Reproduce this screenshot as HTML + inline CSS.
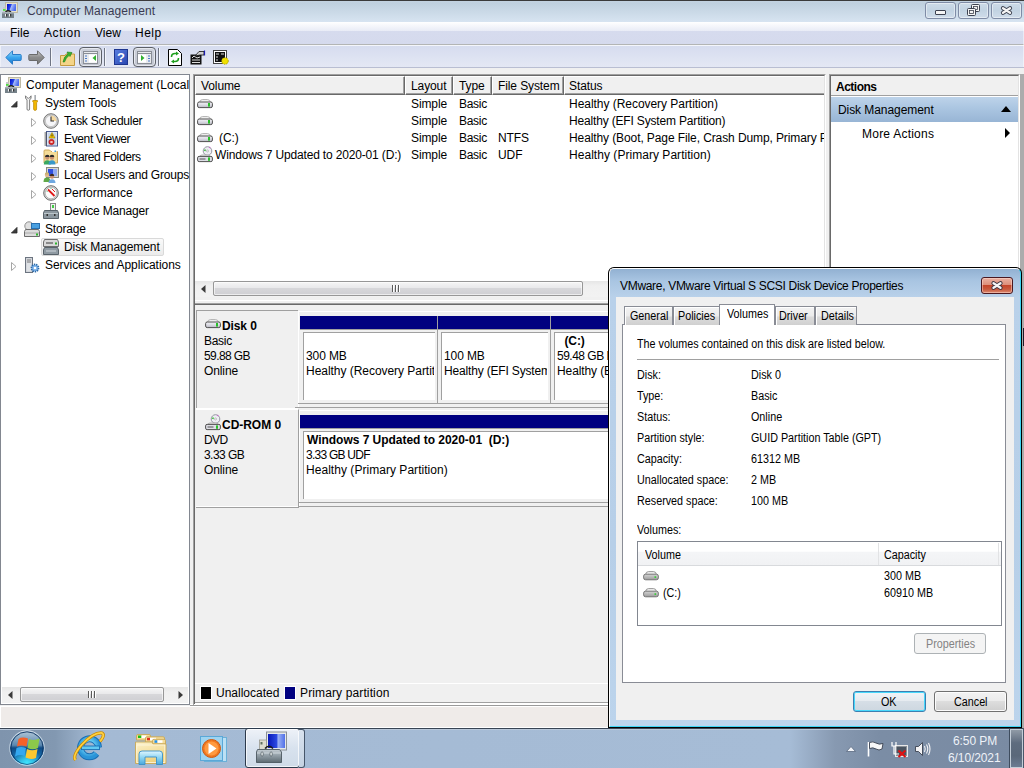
<!DOCTYPE html>
<html><head><meta charset="utf-8">
<style>
*{box-sizing:border-box;}
html,body{margin:0;padding:0;}
body{width:1024px;height:768px;position:relative;overflow:hidden;background:#f0f0f0;font-family:"Liberation Sans",sans-serif;font-size:12px;color:#000;}
.a{position:absolute;}
.t{position:absolute;white-space:nowrap;line-height:15px;height:15px;}
.b{font-weight:bold;}
.dt{position:absolute;white-space:nowrap;line-height:15px;height:15px;font-size:12px;transform:scaleX(0.897);transform-origin:0 0;}
svg{position:absolute;overflow:visible;}
</style></head><body>
<div class="a" style="left:0px;top:0px;width:1024px;height:1px;background:#3a3a3a"></div><div class="a" style="left:0px;top:1px;width:1024px;height:21px;background:linear-gradient(#c3d3e1,#bfd0de 10%,#d7e4f1)"></div><div class="a" style="left:0px;top:22px;width:1024px;height:22px;background:linear-gradient(#ffffff,#e9ecf6 40%,#d6dbee 42%,#d5daed)"></div><div class="a" style="left:0px;top:44px;width:1024px;height:1px;background:#b3b5b5"></div><div class="a" style="left:0px;top:45px;width:1024px;height:1px;background:#f4f6fb"></div><div class="a" style="left:0px;top:46px;width:1024px;height:21px;background:linear-gradient(#d6dcef,#e4e8f4)"></div><div class="a" style="left:0px;top:67px;width:1024px;height:1px;background:#b9bed2"></div><div class="a" style="left:0px;top:46px;width:1px;height:21px;background:#eef0f8"></div><div class="a" style="left:0px;top:74px;width:190px;height:631px;border:1px solid #828790;background:#fff"></div><div class="a" style="left:193px;top:74px;width:633px;height:227px;background:#fff;border-top:1px solid #a0a0a0;border-left:1px solid #a0a0a0;border-right:1px solid #fff;border-bottom:1px solid #fff"></div><div class="a" style="left:194px;top:75px;width:631px;height:225px;border-top:1px solid #696969;border-left:1px solid #696969;border-right:1px solid #e3e3e3;border-bottom:1px solid #e3e3e3"></div><div class="a" style="left:193px;top:303px;width:633px;height:401px;background:#f0f0f0;border-top:1px solid #a0a0a0;border-left:1px solid #a0a0a0;border-right:1px solid #fff;border-bottom:1px solid #fff"></div><div class="a" style="left:194px;top:304px;width:631px;height:399px;border-top:1px solid #696969;border-left:1px solid #696969;border-right:1px solid #e3e3e3;border-bottom:1px solid #e3e3e3"></div><div class="a" style="left:829px;top:74px;width:191px;height:631px;background:#fff;border-top:1px solid #a0a0a0;border-left:1px solid #a0a0a0;border-right:1px solid #fff;border-bottom:1px solid #fff"></div><div class="a" style="left:830px;top:75px;width:189px;height:629px;border-top:1px solid #696969;border-left:1px solid #696969;border-right:1px solid #e3e3e3;border-bottom:1px solid #e3e3e3"></div><div class="a" style="left:1020px;top:74px;width:4px;height:654px;background:#acacac"></div><div class="a" style="left:1023px;top:23px;width:1px;height:44px;background:rgba(255,255,255,.45)"></div><div class="a" style="left:1023px;top:328px;width:1px;height:18px;background:#1a1a2a"></div><div class="a" style="left:190px;top:704px;width:831px;height:1px;background:#fff"></div><div class="a" style="left:190px;top:705px;width:831px;height:1px;background:#9a9a9a"></div><div class="a" style="left:0px;top:706px;width:1021px;height:1px;background:#fff"></div><div class="a" style="left:0px;top:707px;width:1021px;height:21px;background:#efebe9;border-left:1px solid #fff;border-bottom:1px solid #fff"></div><div class="a" style="left:0px;top:728px;width:1024px;height:40px;background:linear-gradient(90deg,#7f94ad 0,#8298b1 55px,#a4bad4 95px,#a6bcd6 790px,#8799b1 835px,#7b8da5 880px,#7a8ba3 1024px)"></div><div class="a" style="left:0px;top:728px;width:1024px;height:1px;background:#384454"></div><div class="a" style="left:0px;top:729px;width:1024px;height:1px;background:#b9c8da"></div><svg style="left:2px;top:2px" width="16" height="16" viewBox="0 0 16 16"><defs><linearGradient id="scr" x1="0" y1="0" x2="1" y2="0.3"><stop offset="0" stop-color="#0008c8"/><stop offset=".45" stop-color="#2848e8"/><stop offset=".55" stop-color="#a8bcf8"/><stop offset="1" stop-color="#4c6cf0"/></linearGradient></defs><rect x="3.5" y="0.5" width="12" height="10" fill="#e6e2cc" stroke="#bdb9a4"/><rect x="5" y="2" width="9" height="7" fill="url(#scr)"/><rect x="1" y="5" width="2.5" height="5" fill="#c8c8cc"/><rect x="1" y="7" width="2.5" height="1.8" fill="#50e040"/><path d="M3.5 10 Q6 7.5 9 10" stroke="#222" stroke-width="1.3" fill="none"/><rect x="0" y="10" width="12" height="6" fill="#76828a"/><rect x="0" y="10" width="12" height="1.5" fill="#a8b2b8"/><rect x="3" y="12" width="1.2" height="2.5" fill="#f0f0f0"/><rect x="4.2" y="12" width="1" height="2.5" fill="#222"/><rect x="7" y="12" width="1.2" height="2.5" fill="#f0f0f0"/><rect x="8.2" y="12" width="1" height="2.5" fill="#222"/></svg><div class="t" style="left:27px;top:4px;letter-spacing:0.11px;color:#3b3b52">Computer Management</div><div class="a" style="left:925px;top:2px;width:31px;height:17px;border:1px solid #7f8ca6;border-radius:3px;background:linear-gradient(#cddbe8,#c2d3e2 50%,#cfdcea);box-shadow:inset 0 0 0 1px rgba(255,255,255,.45)"></div><div class="a" style="left:958px;top:2px;width:31px;height:17px;border:1px solid #7f8ca6;border-radius:3px;background:linear-gradient(#cddbe8,#c2d3e2 50%,#cfdcea);box-shadow:inset 0 0 0 1px rgba(255,255,255,.45)"></div><div class="a" style="left:991px;top:2px;width:31px;height:17px;border:1px solid #7f8ca6;border-radius:3px;background:linear-gradient(#cddbe8,#c2d3e2 50%,#cfdcea);box-shadow:inset 0 0 0 1px rgba(255,255,255,.45)"></div><div class="a" style="left:935px;top:10px;width:11px;height:5px;background:#f4f4f4;border:1px solid #3d4250;border-radius:1px"></div><svg style="left:966px;top:4px" width="15" height="13" viewBox="0 0 15 13"><rect x="5.5" y="0.5" width="8" height="7" rx="1" fill="#f4f4f4" stroke="#3d4250"/><rect x="7.5" y="2.5" width="4" height="3" fill="none" stroke="#3d4250" stroke-width="0.8"/><rect x="1.5" y="4.5" width="8" height="7" rx="1" fill="#f4f4f4" stroke="#3d4250"/><rect x="3.5" y="6.5" width="4" height="3" fill="none" stroke="#3d4250" stroke-width="0.8"/></svg><svg style="left:1000px;top:5px" width="13" height="11" viewBox="0 0 13 11"><path d="M3 3.2 L10 7.8 M10 3.2 L3 7.8" stroke="#3d4250" stroke-width="4.2" stroke-linecap="round"/><path d="M3 3.2 L10 7.8 M10 3.2 L3 7.8" stroke="#f4f4f4" stroke-width="2.3" stroke-linecap="round"/></svg><div class="t" style="left:10px;top:26px;letter-spacing:0px;">File</div><div class="t" style="left:44px;top:26px;letter-spacing:0.6px;">Action</div><div class="t" style="left:95px;top:26px;letter-spacing:0px;">View</div><div class="t" style="left:135px;top:26px;letter-spacing:0.5px;">Help</div><div class="a" style="left:0;top:0;width:189px;height:705px;overflow:hidden"><svg style="left:5px;top:77px" width="16" height="16" viewBox="0 0 16 16"><defs><linearGradient id="scr" x1="0" y1="0" x2="1" y2="0.3"><stop offset="0" stop-color="#0008c8"/><stop offset=".45" stop-color="#2848e8"/><stop offset=".55" stop-color="#a8bcf8"/><stop offset="1" stop-color="#4c6cf0"/></linearGradient></defs><rect x="3.5" y="0.5" width="12" height="10" fill="#e6e2cc" stroke="#bdb9a4"/><rect x="5" y="2" width="9" height="7" fill="url(#scr)"/><rect x="1" y="5" width="2.5" height="5" fill="#c8c8cc"/><rect x="1" y="7" width="2.5" height="1.8" fill="#50e040"/><path d="M3.5 10 Q6 7.5 9 10" stroke="#222" stroke-width="1.3" fill="none"/><rect x="0" y="10" width="12" height="6" fill="#76828a"/><rect x="0" y="10" width="12" height="1.5" fill="#a8b2b8"/><rect x="3" y="12" width="1.2" height="2.5" fill="#f0f0f0"/><rect x="4.2" y="12" width="1" height="2.5" fill="#222"/><rect x="7" y="12" width="1.2" height="2.5" fill="#f0f0f0"/><rect x="8.2" y="12" width="1" height="2.5" fill="#222"/></svg><div class="t" style="left:26px;top:78px;letter-spacing:0.04px;">Computer Management (Local)</div><svg style="left:24px;top:95px" width="16" height="16" viewBox="0 0 16 16"><defs><linearGradient id="wr" x1="0" y1="0" x2="1" y2="0"><stop offset="0" stop-color="#c8c8c8"/><stop offset=".5" stop-color="#fafafa"/><stop offset="1" stop-color="#b0b0b0"/></linearGradient></defs><path d="M1.5 0.8 Q0.8 3.5 3 5 L3 14 Q3 15.3 4.3 15.3 Q5.6 15.3 5.6 14 L5.6 5 Q7.8 3.5 7.1 0.8 L5.6 2.5 L4.3 3.4 L3 2.5 Z" fill="url(#wr)" stroke="#6a6a6a" stroke-width="0.8" stroke-linejoin="round"/><rect x="10.6" y="0" width="1" height="6" fill="#707880"/><path d="M8.8 5.5 L13.4 5.5 L13.4 7 L12.6 7.6 L12.6 14 Q12.6 15.4 11.1 15.4 Q9.6 15.4 9.6 14 L9.6 7.6 L8.8 7 Z" fill="#f2b800" stroke="#b88400" stroke-width="0.7"/></svg><div class="t" style="left:45px;top:96px;letter-spacing:0px;">System Tools</div><svg style="left:11px;top:101px" width="7" height="7" viewBox="0 0 7 7"><path d="M6 0.4 L6 6 L0.4 6 Z" fill="#3c3c3c" stroke="#262626" stroke-width="0.8"/></svg><svg style="left:43px;top:113px" width="16" height="16" viewBox="0 0 16 16"><circle cx="8" cy="8" r="7.3" fill="#d0d0d0" stroke="#767676"/><circle cx="8" cy="8" r="5.6" fill="#f6f6f8" stroke="#b0b0b0" stroke-width="0.6"/><path d="M8 8 L8 2.5 A5.5 5.5 0 0 1 13.5 8 Z" fill="#f4d8a0"/><path d="M8 3.5 L8 8 L11 8" stroke="#333" stroke-width="1.1" fill="none"/></svg><div class="t" style="left:64px;top:114px;letter-spacing:-0.27px;">Task Scheduler</div><svg style="left:31px;top:118px" width="6" height="9" viewBox="0 0 6 9"><path d="M0.5 0.5 L5 4.5 L0.5 8.5 Z" fill="#fff" stroke="#a6a6a6"/></svg><svg style="left:43px;top:131px" width="16" height="16" viewBox="0 0 16 16"><rect x="3.5" y="0.5" width="11" height="14.5" fill="#dce6f4" stroke="#4a5c94"/><path d="M5 3 L13 3 M5 5 L13 5 M5 7 L13 7 M5 9 L13 9 M5 11 L13 11 M5 13 L13 13" stroke="#a8b8d8" stroke-width="0.7"/><path d="M1.5 2 L4 2 M1.5 4 L4 4 M1.5 6 L4 6 M1.5 8 L4 8 M1.5 10 L4 10 M1.5 12 L4 12 M1.5 14 L4 14" stroke="#505050" stroke-width="1"/><path d="M9 1.5 L12 7 L6 7 Z" fill="#f4c800" stroke="#9a7a00" stroke-width="0.6"/><path d="M9 3.5 L9 5.5" stroke="#222" stroke-width="0.9"/><circle cx="8.5" cy="11" r="2.7" fill="#d82828" stroke="#a01010" stroke-width="0.5"/><path d="M7.5 10 L9.5 12 M9.5 10 L7.5 12" stroke="#fff" stroke-width="0.9"/></svg><div class="t" style="left:64px;top:132px;letter-spacing:-0.36px;">Event Viewer</div><svg style="left:31px;top:136px" width="6" height="9" viewBox="0 0 6 9"><path d="M0.5 0.5 L5 4.5 L0.5 8.5 Z" fill="#fff" stroke="#a6a6a6"/></svg><svg style="left:43px;top:149px" width="16" height="16" viewBox="0 0 16 16"><path d="M1 3.5 L1 14 L14.5 14 L14.5 2.5 L8 2.5 L6.5 1 L2 1 Q1 1 1 2 Z" fill="#f4dc98" stroke="#c8a050" stroke-width="0.9"/><rect x="9" y="1.5" width="4.5" height="1.5" fill="#fff"/><rect x="11.5" y="1.5" width="1.5" height="1.5" fill="#3a9ae0"/><circle cx="4.3" cy="8.6" r="2.2" fill="#c89070"/><path d="M2 8 Q2 5.8 4.3 5.8 Q6.6 5.8 6.6 8 Z" fill="#2a2a2a"/><path d="M0.8 15.5 Q0.8 11.2 4.3 11.2 Q7.8 11.2 7.8 15.5 Z" fill="#3aa860"/><circle cx="9" cy="8.6" r="2.2" fill="#c89070"/><path d="M6.7 8 Q6.7 5.8 9 5.8 Q11.3 5.8 11.3 8 Z" fill="#2a2a2a"/><path d="M5.5 15.5 Q5.5 11.2 9 11.2 Q12.5 11.2 12.5 15.5 Z" fill="#3a98c8"/></svg><div class="t" style="left:64px;top:150px;letter-spacing:-0.38px;">Shared Folders</div><svg style="left:31px;top:154px" width="6" height="9" viewBox="0 0 6 9"><path d="M0.5 0.5 L5 4.5 L0.5 8.5 Z" fill="#fff" stroke="#a6a6a6"/></svg><svg style="left:43px;top:167px" width="16" height="16" viewBox="0 0 16 16"><rect x="3.5" y="0.5" width="12" height="10" fill="#d8d8d0" stroke="#8a8a80"/><rect x="5" y="2" width="9" height="7" fill="#3050e0"/><rect x="10" y="2" width="4" height="7" fill="#90a8f0"/><circle cx="4" cy="8" r="2.2" fill="#e0b890"/><path d="M1.8 7.5 Q1.8 5.3 4 5.3 Q6.2 5.3 6.2 7.5 Z" fill="#c8b070"/><path d="M0.5 15 Q0.5 10.6 4 10.6 Q7.5 10.6 7.5 15 Z" fill="#60a848"/><circle cx="9" cy="9.5" r="2.2" fill="#c89070"/><path d="M6.8 9 Q6.8 6.8 9 6.8 Q11.2 6.8 11.2 9 Z" fill="#3a2a20"/><path d="M5.5 16 Q5.5 12.2 9 12.2 Q12.5 12.2 12.5 16 Z" fill="#70a8e0"/></svg><div class="t" style="left:64px;top:168px;letter-spacing:-0.2px;">Local Users and Groups</div><svg style="left:31px;top:172px" width="6" height="9" viewBox="0 0 6 9"><path d="M0.5 0.5 L5 4.5 L0.5 8.5 Z" fill="#fff" stroke="#a6a6a6"/></svg><svg style="left:43px;top:185px" width="16" height="16" viewBox="0 0 16 16"><circle cx="8" cy="8" r="7.3" fill="#d8d8d8" stroke="#6e6e6e"/><circle cx="8" cy="8" r="5.8" fill="#fbfbfb" stroke="#9a9a9a" stroke-width="0.6"/><path d="M3.5 6 L4.5 6.5 M5 3.8 L5.8 4.6 M8 2.8 L8 3.8" stroke="#3a9a5a" stroke-width="0.9"/><path d="M5 4.5 L11.5 11" stroke="#e01818" stroke-width="1.8"/><path d="M9 4 L12 7" stroke="#e01818" stroke-width="1"/></svg><div class="t" style="left:64px;top:186px;letter-spacing:0px;">Performance</div><svg style="left:31px;top:190px" width="6" height="9" viewBox="0 0 6 9"><path d="M0.5 0.5 L5 4.5 L0.5 8.5 Z" fill="#fff" stroke="#a6a6a6"/></svg><svg style="left:43px;top:203px" width="16" height="16" viewBox="0 0 16 16"><rect x="7.5" y="0.5" width="5" height="8" fill="#f0f0f0" stroke="#888"/><rect x="9" y="2" width="2" height="3" fill="#4c4"/><path d="M1.5 7.5 L14.5 7.5 L15.5 10 L15.5 15.5 L0.5 15.5 L0.5 10 Z" fill="#8c979f" stroke="#59636b"/><path d="M1 10.5 L15 10.5" stroke="#c8d0d6" stroke-width="0.8"/><rect x="3.5" y="11" width="1.5" height="2" fill="#333"/><rect x="11" y="11" width="1.5" height="2" fill="#333"/></svg><div class="t" style="left:64px;top:204px;letter-spacing:-0.19px;">Device Manager</div><svg style="left:24px;top:221px" width="16" height="16" viewBox="0 0 16 16"><circle cx="5" cy="5" r="4.2" fill="#e0e0e0" stroke="#909090"/><rect x="7.5" y="2.5" width="8" height="5" fill="#4aa0e0" stroke="#2a70b0"/><path d="M1.5 8.5 L14.5 8.5 L15.5 10.5 L15.5 15.5 L0.5 15.5 L0.5 10.5 Z" fill="#dcdcdc" stroke="#6d6d6d"/><path d="M1 12 L15 12" stroke="#a0a0a0" stroke-width="0.8"/><rect x="12" y="12.5" width="2" height="2" fill="#2bb52b"/></svg><div class="t" style="left:45px;top:222px;letter-spacing:-0.17px;">Storage</div><svg style="left:11px;top:227px" width="7" height="7" viewBox="0 0 7 7"><path d="M6 0.4 L6 6 L0.4 6 Z" fill="#3c3c3c" stroke="#262626" stroke-width="0.8"/></svg><div class="a" style="left:41px;top:238px;width:123px;height:18px;border:1px solid #d9d9d9;border-radius:2px;background:linear-gradient(#fafafa,#ebebeb)"></div><svg style="left:43px;top:239px" width="16" height="16" viewBox="0 0 16 16"><path d="M1.5 0.5 L14.5 0.5 L15.5 3 L15.5 7.5 L0.5 7.5 L0.5 3 Z" fill="#d8d8d8" stroke="#6d6d6d"/><path d="M3 4 L10 4" stroke="#555" stroke-width="1.2"/><rect x="12" y="3.5" width="2" height="2" fill="#2bb52b"/><path d="M1.5 8.5 L14.5 8.5 L15.5 11 L15.5 15.5 L0.5 15.5 L0.5 11 Z" fill="#8f9aa2" stroke="#59636b"/><path d="M3 12 L13 12" stroke="#d0d6dc" stroke-width="1"/></svg><div class="t" style="left:64px;top:240px;letter-spacing:-0.07px;">Disk Management</div><svg style="left:24px;top:257px" width="16" height="16" viewBox="0 0 16 16"><rect x="1.5" y="0.5" width="7" height="15" fill="#c8ccd2" stroke="#6c7480"/><rect x="2.5" y="1.5" width="5" height="13" fill="#dfe2e6"/><path d="M3 3 L7 3 M3 5 L7 5" stroke="#555" stroke-width="0.8"/><circle cx="11" cy="11" r="3.6" fill="#7ab0e8" stroke="#2d6aa8" stroke-dasharray="1.3 0.9" stroke-width="1.6"/><circle cx="11" cy="11" r="1.3" fill="#fff"/></svg><div class="t" style="left:45px;top:258px;letter-spacing:-0.04px;">Services and Applications</div><svg style="left:11px;top:262px" width="6" height="9" viewBox="0 0 6 9"><path d="M0.5 0.5 L5 4.5 L0.5 8.5 Z" fill="#fff" stroke="#a6a6a6"/></svg></div><div class="a" style="left:2px;top:687px;width:186px;height:16px;background:linear-gradient(#e6e6e6,#f0f0f0 30%,#f2f2f2)"></div><svg style="left:8px;top:691px" width="5" height="8" viewBox="0 0 5 8"><path d="M4.5 0 L0 4 L4.5 8 Z" fill="#3a3a3a"/></svg><svg style="left:178px;top:691px" width="5" height="8" viewBox="0 0 5 8"><path d="M0.5 0 L5 4 L0.5 8 Z" fill="#3a3a3a"/></svg><div class="a" style="left:20px;top:687px;width:144px;height:15px;border:1px solid #979797;border-radius:2px;background:linear-gradient(#f6f6f6,#e9e9eb 45%,#d7d7da 50%,#cfcfd3);box-shadow:inset 0 0 0 1px rgba(255,255,255,.6)"></div><div class="a" style="left:88px;top:691px;width:2px;height:7px;background:#5a5a5a;border-right:1px solid #fff"></div><div class="a" style="left:91px;top:691px;width:2px;height:7px;background:#5a5a5a;border-right:1px solid #fff"></div><div class="a" style="left:94px;top:691px;width:2px;height:7px;background:#5a5a5a;border-right:1px solid #fff"></div><div class="a" style="left:195px;top:76px;width:629px;height:223px;overflow:hidden"><div class="a" style="left:0px;top:0px;width:210px;height:19px;background:#f0f0f0;border-top:1px solid #fff;border-left:1px solid #fff;border-right:1px solid #696969;border-bottom:1px solid #696969"></div><div class="a" style="left:1px;top:17px;width:208px;height:1px;background:#a0a0a0"></div><div class="a" style="left:208px;top:1px;width:1px;height:17px;background:#a0a0a0"></div><div class="t" style="left:6px;top:3px;letter-spacing:-0.1px;">Volume</div><div class="a" style="left:210px;top:0px;width:48px;height:19px;background:#f0f0f0;border-top:1px solid #fff;border-left:1px solid #fff;border-right:1px solid #696969;border-bottom:1px solid #696969"></div><div class="a" style="left:211px;top:17px;width:46px;height:1px;background:#a0a0a0"></div><div class="a" style="left:256px;top:1px;width:1px;height:17px;background:#a0a0a0"></div><div class="t" style="left:216px;top:3px;letter-spacing:-0.1px;">Layout</div><div class="a" style="left:258px;top:0px;width:39px;height:19px;background:#f0f0f0;border-top:1px solid #fff;border-left:1px solid #fff;border-right:1px solid #696969;border-bottom:1px solid #696969"></div><div class="a" style="left:259px;top:17px;width:37px;height:1px;background:#a0a0a0"></div><div class="a" style="left:295px;top:1px;width:1px;height:17px;background:#a0a0a0"></div><div class="t" style="left:264px;top:3px;letter-spacing:-0.1px;">Type</div><div class="a" style="left:297px;top:0px;width:72px;height:19px;background:#f0f0f0;border-top:1px solid #fff;border-left:1px solid #fff;border-right:1px solid #696969;border-bottom:1px solid #696969"></div><div class="a" style="left:298px;top:17px;width:70px;height:1px;background:#a0a0a0"></div><div class="a" style="left:367px;top:1px;width:1px;height:17px;background:#a0a0a0"></div><div class="t" style="left:303px;top:3px;letter-spacing:-0.1px;">File System</div><div class="a" style="left:369px;top:0px;width:337px;height:19px;background:#f0f0f0;border-top:1px solid #fff;border-left:1px solid #fff;border-right:1px solid #696969;border-bottom:1px solid #696969"></div><div class="a" style="left:370px;top:17px;width:335px;height:1px;background:#a0a0a0"></div><div class="a" style="left:704px;top:1px;width:1px;height:17px;background:#a0a0a0"></div><div class="t" style="left:374px;top:3px;letter-spacing:-0.1px;">Status</div><svg style="left:2px;top:23px" width="16" height="10" viewBox="0 0 16 10"><defs><linearGradient id="dg" x1="0" y1="0" x2="0" y2="1"><stop offset="0" stop-color="#f2f2f6"/><stop offset=".5" stop-color="#dcdce4"/><stop offset="1" stop-color="#b8b8c2"/></linearGradient></defs><path d="M2.5 3.2 Q3 0.6 5.5 0.6 L10.5 0.6 Q13 0.6 13.5 3.2" fill="#f4f4f4" stroke="#a8a8a8" stroke-width="0.9"/><rect x="0.6" y="3" width="14.8" height="5.6" rx="1.6" fill="url(#dg)" stroke="#505050" stroke-width="1"/><rect x="11" y="4" width="2" height="3.6" fill="#28c028"/></svg><div class="t" style="left:216px;top:21px;letter-spacing:-0.1px;">Simple</div><div class="t" style="left:264px;top:21px;letter-spacing:-0.3px;">Basic</div><div class="t" style="left:374px;top:21px;width:255px;overflow:hidden;letter-spacing:-0.04px">Healthy (Recovery Partition)</div><svg style="left:2px;top:40px" width="16" height="10" viewBox="0 0 16 10"><defs><linearGradient id="dg" x1="0" y1="0" x2="0" y2="1"><stop offset="0" stop-color="#f2f2f6"/><stop offset=".5" stop-color="#dcdce4"/><stop offset="1" stop-color="#b8b8c2"/></linearGradient></defs><path d="M2.5 3.2 Q3 0.6 5.5 0.6 L10.5 0.6 Q13 0.6 13.5 3.2" fill="#f4f4f4" stroke="#a8a8a8" stroke-width="0.9"/><rect x="0.6" y="3" width="14.8" height="5.6" rx="1.6" fill="url(#dg)" stroke="#505050" stroke-width="1"/><rect x="11" y="4" width="2" height="3.6" fill="#28c028"/></svg><div class="t" style="left:216px;top:38px;letter-spacing:-0.1px;">Simple</div><div class="t" style="left:264px;top:38px;letter-spacing:-0.3px;">Basic</div><div class="t" style="left:374px;top:38px;width:255px;overflow:hidden;letter-spacing:-0.17px">Healthy (EFI System Partition)</div><svg style="left:2px;top:57px" width="16" height="10" viewBox="0 0 16 10"><defs><linearGradient id="dg" x1="0" y1="0" x2="0" y2="1"><stop offset="0" stop-color="#f2f2f6"/><stop offset=".5" stop-color="#dcdce4"/><stop offset="1" stop-color="#b8b8c2"/></linearGradient></defs><path d="M2.5 3.2 Q3 0.6 5.5 0.6 L10.5 0.6 Q13 0.6 13.5 3.2" fill="#f4f4f4" stroke="#a8a8a8" stroke-width="0.9"/><rect x="0.6" y="3" width="14.8" height="5.6" rx="1.6" fill="url(#dg)" stroke="#505050" stroke-width="1"/><rect x="11" y="4" width="2" height="3.6" fill="#28c028"/></svg><div class="t" style="left:24px;top:55px;letter-spacing:-0.1px;">(C:)</div><div class="t" style="left:216px;top:55px;letter-spacing:-0.1px;">Simple</div><div class="t" style="left:264px;top:55px;letter-spacing:-0.3px;">Basic</div><div class="t" style="left:303px;top:55px;letter-spacing:-0.1px;">NTFS</div><div class="t" style="left:374px;top:55px;width:255px;overflow:hidden;letter-spacing:-0.1px">Healthy (Boot, Page File, Crash Dump, Primary Partition)</div><svg style="left:2px;top:70px" width="16" height="16" viewBox="0 0 16 16"><circle cx="10.5" cy="5" r="4.3" fill="#eeeef4" stroke="#8c8c98" stroke-width="0.9"/><circle cx="10.5" cy="5" r="1" fill="#fff" stroke="#999" stroke-width="0.6"/><path d="M7.2 4 L8.8 4.6" stroke="#40c040" stroke-width="1.6"/><path d="M12.5 1.2 L13.2 1.8" stroke="#d040d0" stroke-width="1.2"/><path d="M2.5 11 Q3 9 5 9 L11 9 Q13 9 13.5 11" fill="#f0f0f0" stroke="#a8a8a8" stroke-width="0.9"/><rect x="0.6" y="10.4" width="14.8" height="5.2" rx="1.5" fill="#dedee6" stroke="#505050" stroke-width="1"/><path d="M2.5 13 L8.5 13" stroke="#555" stroke-width="1"/><rect x="11" y="11.4" width="2" height="3.4" fill="#28c028"/></svg><div class="t" style="left:20px;top:72px;letter-spacing:-0.16px;">Windows 7 Updated to 2020-01 (D:)</div><div class="t" style="left:216px;top:72px;letter-spacing:-0.1px;">Simple</div><div class="t" style="left:264px;top:72px;letter-spacing:-0.3px;">Basic</div><div class="t" style="left:303px;top:72px;letter-spacing:-0.1px;">UDF</div><div class="t" style="left:374px;top:72px;width:255px;overflow:hidden;letter-spacing:0.04px">Healthy (Primary Partition)</div></div><div class="a" style="left:195px;top:281px;width:629px;height:16px;background:linear-gradient(#e6e6e6,#f0f0f0 30%,#f2f2f2)"></div><svg style="left:201px;top:285px" width="5" height="8" viewBox="0 0 5 8"><path d="M4.5 0 L0 4 L4.5 8 Z" fill="#3a3a3a"/></svg><svg style="left:814px;top:285px" width="5" height="8" viewBox="0 0 5 8"><path d="M0.5 0 L5 4 L0.5 8 Z" fill="#3a3a3a"/></svg><div class="a" style="left:213px;top:281px;width:370px;height:15px;border:1px solid #979797;border-radius:2px;background:linear-gradient(#f6f6f6,#e9e9eb 45%,#d7d7da 50%,#cfcfd3);box-shadow:inset 0 0 0 1px rgba(255,255,255,.6)"></div><div class="a" style="left:392px;top:285px;width:2px;height:7px;background:#5a5a5a;border-right:1px solid #fff"></div><div class="a" style="left:395px;top:285px;width:2px;height:7px;background:#5a5a5a;border-right:1px solid #fff"></div><div class="a" style="left:398px;top:285px;width:2px;height:7px;background:#5a5a5a;border-right:1px solid #fff"></div><div class="a" style="left:195px;top:297px;width:629px;height:3px;background:#f0f0f0"></div><div class="a" style="left:195px;top:305px;width:629px;height:398px;background:#f0f0f0"></div><div class="a" style="left:196px;top:310px;width:102px;height:98px;background:#f0f0f0;border-top:1px solid #a0a0a0;border-left:1px solid #a0a0a0"></div><div class="a" style="left:196px;top:408px;width:102px;height:1px;background:#fff"></div><svg style="left:205px;top:319px" width="16" height="10" viewBox="0 0 16 10"><defs><linearGradient id="dg" x1="0" y1="0" x2="0" y2="1"><stop offset="0" stop-color="#f2f2f6"/><stop offset=".5" stop-color="#dcdce4"/><stop offset="1" stop-color="#b8b8c2"/></linearGradient></defs><path d="M2.5 3.2 Q3 0.6 5.5 0.6 L10.5 0.6 Q13 0.6 13.5 3.2" fill="#f4f4f4" stroke="#a8a8a8" stroke-width="0.9"/><rect x="0.6" y="3" width="14.8" height="5.6" rx="1.6" fill="url(#dg)" stroke="#505050" stroke-width="1"/><rect x="11" y="4" width="2" height="3.6" fill="#28c028"/></svg><div class="t" style="left:222px;top:319px;letter-spacing:-0.1px;font-weight:bold">Disk 0</div><div class="t" style="left:204px;top:334px;letter-spacing:-0.3px;">Basic</div><div class="t" style="left:204px;top:349px;letter-spacing:-0.6px;">59.88 GB</div><div class="t" style="left:204px;top:364px;letter-spacing:-0.1px;">Online</div><div class="a" style="left:196px;top:409px;width:103px;height:99px;background:#f0f0f0;border-top:1px solid #fff;border-bottom:1px solid #a0a0a0;border-right:1px solid #a0a0a0"></div><div class="a" style="left:196px;top:506px;width:102px;height:1px;background:#fff"></div><svg style="left:205px;top:414px" width="16" height="16" viewBox="0 0 16 16"><circle cx="10.5" cy="5" r="4.3" fill="#eeeef4" stroke="#8c8c98" stroke-width="0.9"/><circle cx="10.5" cy="5" r="1" fill="#fff" stroke="#999" stroke-width="0.6"/><path d="M7.2 4 L8.8 4.6" stroke="#40c040" stroke-width="1.6"/><path d="M12.5 1.2 L13.2 1.8" stroke="#d040d0" stroke-width="1.2"/><path d="M2.5 11 Q3 9 5 9 L11 9 Q13 9 13.5 11" fill="#f0f0f0" stroke="#a8a8a8" stroke-width="0.9"/><rect x="0.6" y="10.4" width="14.8" height="5.2" rx="1.5" fill="#dedee6" stroke="#505050" stroke-width="1"/><path d="M2.5 13 L8.5 13" stroke="#555" stroke-width="1"/><rect x="11" y="11.4" width="2" height="3.4" fill="#28c028"/></svg><div class="t" style="left:222px;top:418px;letter-spacing:-0.04px;font-weight:bold">CD-ROM 0</div><div class="t" style="left:204px;top:433px;letter-spacing:-0.6px;">DVD</div><div class="t" style="left:204px;top:448px;letter-spacing:-0.55px;">3.33 GB</div><div class="t" style="left:204px;top:463px;letter-spacing:-0.1px;">Online</div><div class="a" style="left:298px;top:311px;width:526px;height:96px;background:#f0f0f0;border-top:1px solid #fff;border-left:1px solid #fff"></div><div class="a" style="left:298px;top:403px;width:526px;height:1px;background:#a0a0a0"></div><div class="a" style="left:295px;top:407px;width:529px;height:1px;background:#a0a0a0"></div><div class="a" style="left:300px;top:316px;width:137px;height:13px;background:#000080"></div><div class="a" style="left:300px;top:329px;width:137px;height:1px;background:#a0a0a0"></div><div class="a" style="left:303px;top:332px;width:132px;height:68px;background:#fff;border-top:1px solid #a0a0a0;border-left:1px solid #a0a0a0"></div><div class="a" style="left:304px;top:333px;width:130px;height:66px;overflow:hidden"><div class="t" style="left:2px;top:16px;letter-spacing:-0.1px;">300 MB</div><div class="t" style="left:2px;top:31px;letter-spacing:-0.04px;">Healthy (Recovery Partition)</div></div><div class="a" style="left:438px;top:316px;width:112px;height:13px;background:#000080"></div><div class="a" style="left:438px;top:329px;width:112px;height:1px;background:#a0a0a0"></div><div class="a" style="left:441px;top:332px;width:107px;height:68px;background:#fff;border-top:1px solid #a0a0a0;border-left:1px solid #a0a0a0"></div><div class="a" style="left:442px;top:333px;width:105px;height:66px;overflow:hidden"><div class="t" style="left:2px;top:16px;letter-spacing:-0.1px;">100 MB</div><div class="t" style="left:2px;top:31px;letter-spacing:-0.17px;">Healthy (EFI System Partition)</div></div><div class="a" style="left:437px;top:316px;width:1px;height:87px;background:#a0a0a0"></div><div class="a" style="left:550px;top:316px;width:1px;height:87px;background:#a0a0a0"></div><div class="a" style="left:551px;top:316px;width:273px;height:13px;background:#000080"></div><div class="a" style="left:551px;top:329px;width:273px;height:1px;background:#a0a0a0"></div><div class="a" style="left:554px;top:332px;width:268px;height:68px;background:#fff;border-top:1px solid #a0a0a0;border-left:1px solid #a0a0a0"></div><div class="a" style="left:555px;top:333px;width:266px;height:66px;overflow:hidden"><div class="t" style="left:3px;top:1px;letter-spacing:-0.1px;font-weight:bold">&nbsp;&nbsp;(C:)</div><div class="t" style="left:2px;top:16px;letter-spacing:-0.5px;">59.48 GB NTFS</div><div class="t" style="left:2px;top:31px;letter-spacing:-0.1px;">Healthy (Boot, Page File, Crash Dump, Primary Partition)</div></div><div class="a" style="left:299px;top:410px;width:525px;height:96px;background:#f0f0f0;border-top:1px solid #fff;border-left:1px solid #fff"></div><div class="a" style="left:299px;top:502px;width:525px;height:1px;background:#a0a0a0"></div><div class="a" style="left:299px;top:506px;width:525px;height:1px;background:#a0a0a0"></div><div class="a" style="left:300px;top:415px;width:524px;height:13px;background:#000080"></div><div class="a" style="left:300px;top:428px;width:524px;height:1px;background:#a0a0a0"></div><div class="a" style="left:303px;top:431px;width:519px;height:68px;background:#fff;border-top:1px solid #a0a0a0;border-left:1px solid #a0a0a0"></div><div class="a" style="left:304px;top:432px;width:517px;height:66px;overflow:hidden"><div class="t" style="left:3px;top:1px;letter-spacing:-0.03px;font-weight:bold">Windows 7 Updated to 2020-01&nbsp; (D:)</div><div class="t" style="left:2px;top:16px;letter-spacing:-0.75px;">3.33 GB UDF</div><div class="t" style="left:2px;top:31px;letter-spacing:0.04px;">Healthy (Primary Partition)</div></div><div class="a" style="left:195px;top:683px;width:629px;height:1px;background:#fff"></div><div class="a" style="left:195px;top:702px;width:629px;height:1px;background:#a0a0a0"></div><div class="a" style="left:200px;top:686px;width:12px;height:14px;background:#000;border:1px solid #fff"></div><div class="t" style="left:216px;top:686px;letter-spacing:0px;">Unallocated</div><div class="a" style="left:284px;top:686px;width:12px;height:14px;background:#000080;border:1px solid #fff"></div><div class="t" style="left:300px;top:686px;letter-spacing:0.125px;">Primary partition</div><div class="a" style="left:193px;top:74px;width:1px;height:631px;background:#a0a0a0"></div><div class="a" style="left:194px;top:75px;width:1px;height:629px;background:#696969"></div><div class="a" style="left:831px;top:76px;width:187px;height:19px;background:#f0f0f0"></div><div class="a" style="left:831px;top:95px;width:187px;height:1px;background:#a0a0a0"></div><div class="a" style="left:831px;top:96px;width:187px;height:1px;background:#fff"></div><div class="t" style="left:836px;top:80px;letter-spacing:-0.5px;font-weight:bold">Actions</div><div class="a" style="left:831px;top:97px;width:187px;height:25px;background:linear-gradient(#bdd3ea,#a9c4e0 50%,#98b5d5)"></div><div class="t" style="left:838px;top:103px;letter-spacing:-0.07px;">Disk Management</div><svg style="left:1001px;top:106px" width="10" height="6" viewBox="0 0 10 6"><path d="M0 6 L5 0 L10 6 Z" fill="#000"/></svg><div class="t" style="left:862px;top:127px;letter-spacing:0.23px;">More Actions</div><svg style="left:1005px;top:128px" width="5" height="10" viewBox="0 0 5 10"><path d="M0 0 L5 5 L0 10 Z" fill="#000"/></svg><svg style="left:5px;top:50px" width="17" height="15" viewBox="0 0 17 15"><defs><linearGradient id="ab" x1="0" y1="0" x2="0" y2="1"><stop offset="0" stop-color="#9fe0fc"/><stop offset=".5" stop-color="#3aa6ee"/><stop offset="1" stop-color="#1a78d0"/></linearGradient></defs><path d="M0.8 7.5 L7.5 0.8 L7.5 4.5 L15.5 4.5 Q16.2 4.5 16.2 5.5 L16.2 9.5 Q16.2 10.5 15.5 10.5 L7.5 10.5 L7.5 14.2 Z" fill="url(#ab)" stroke="#2a7cc8" stroke-width="1" stroke-linejoin="round"/></svg><svg style="left:28px;top:50px" width="17" height="15" viewBox="0 0 17 15"><defs><linearGradient id="af" x1="0" y1="0" x2="0" y2="1"><stop offset="0" stop-color="#c8c8c8"/><stop offset=".5" stop-color="#8c8c8c"/><stop offset="1" stop-color="#777"/></linearGradient></defs><path d="M16.2 7.5 L9.5 0.8 L9.5 4.5 L1.5 4.5 Q0.8 4.5 0.8 5.5 L0.8 9.5 Q0.8 10.5 1.5 10.5 L9.5 10.5 L9.5 14.2 Z" fill="url(#af)" stroke="#6a6a6a" stroke-width="1" stroke-linejoin="round"/></svg><div class="a" style="left:50px;top:48px;width:1px;height:18px;background:#6f7584"></div><div class="a" style="left:51px;top:48px;width:1px;height:18px;background:#f4f6fb"></div><div class="a" style="left:104px;top:48px;width:1px;height:18px;background:#6f7584"></div><div class="a" style="left:105px;top:48px;width:1px;height:18px;background:#f4f6fb"></div><div class="a" style="left:158px;top:48px;width:1px;height:18px;background:#6f7584"></div><div class="a" style="left:159px;top:48px;width:1px;height:18px;background:#f4f6fb"></div><svg style="left:60px;top:50px" width="15" height="16" viewBox="0 0 15 16"><path d="M0.5 5.5 L5 5.5 L6 4 L14.5 4 L14.5 15.5 L0.5 15.5 Z" fill="#f4d488" stroke="#c49a40"/><path d="M3 12 Q4 6 8 4 L7 2 L12 2.5 L10 6.5 L9 5.5 Q6 7.5 4.5 12 Z" fill="#38b030" stroke="#208018" stroke-width="0.6"/></svg><div class="a" style="left:79px;top:47px;width:23px;height:20px;border:1px solid #5c6068;border-radius:4px;background:linear-gradient(#cdd1db,#c0c4cf);box-shadow:inset 0 0 0 1px #e6e8ee"></div><div class="a" style="left:133px;top:47px;width:23px;height:20px;border:1px solid #5c6068;border-radius:4px;background:linear-gradient(#cdd1db,#c0c4cf);box-shadow:inset 0 0 0 1px #e6e8ee"></div><svg style="left:83px;top:51px" width="15" height="13" viewBox="0 0 15 13"><rect x="0.5" y="0.5" width="14" height="12" fill="#e8eaee" stroke="#8a8e96"/><path d="M1 2.5 L14 2.5" stroke="#8a8e96"/><rect x="6" y="3.5" width="8" height="8" fill="#fff"/><path d="M2 5 L4 5 M2 7.5 L4 7.5 M2 10 L4 10" stroke="#4a7ac8" stroke-width="1.2"/><path d="M13 4 L9.5 7 L13 10 Z" fill="#30b030"/></svg><svg style="left:137px;top:51px" width="15" height="13" viewBox="0 0 15 13"><rect x="0.5" y="0.5" width="14" height="12" fill="#e8eaee" stroke="#8a8e96"/><path d="M1 2.5 L14 2.5" stroke="#8a8e96"/><rect x="1" y="3.5" width="8" height="8" fill="#fff"/><path d="M11 5 L13 5 M11 7.5 L13 7.5 M11 10 L13 10" stroke="#4a7ac8" stroke-width="1.2"/><path d="M4 4 L7.5 7 L4 10 Z" fill="#30b030"/></svg><svg style="left:114px;top:49px" width="14" height="16" viewBox="0 0 14 16"><defs><linearGradient id="hg" x1="0" y1="0" x2="1" y2="1"><stop offset="0" stop-color="#5a7ee0"/><stop offset="1" stop-color="#2846b0"/></linearGradient></defs><rect x="0.5" y="0.5" width="13" height="15" fill="url(#hg)" stroke="#1e3690"/><text x="7" y="12.5" font-family="Liberation Sans" font-size="13" font-weight="bold" fill="#fff" text-anchor="middle">?</text></svg><svg style="left:168px;top:49px" width="14" height="17" viewBox="0 0 14 17"><path d="M0.5 0.5 L9.5 0.5 L13.5 4.5 L13.5 16.5 L0.5 16.5 Z" fill="#fff" stroke="#000"/><path d="M3.5 8 Q3.5 4.5 7 4.5 L9 4.5" stroke="#20a020" stroke-width="1.6" fill="none"/><path d="M8 2.5 L11 4.5 L8 6.5 Z" fill="#20a020"/><path d="M10.5 9 Q10.5 12.5 7 12.5 L5 12.5" stroke="#20a020" stroke-width="1.6" fill="none"/><path d="M6 10.5 L3 12.5 L6 14.5 Z" fill="#20a020"/></svg><svg style="left:190px;top:50px" width="16" height="15" viewBox="0 0 16 15"><rect x="0.5" y="4.5" width="11" height="10" fill="#111"/><path d="M2 10 L10 10 M2 12.5 L10 12.5" stroke="#ddd" stroke-width="1"/><path d="M2 8 L4 6 L7 8 L10 7" stroke="#ddd" stroke-width="1" fill="none"/><path d="M5 6 L9 1.5 L14 1.5 L14 5 L10 5 Z" fill="#d0d0d0" stroke="#111" stroke-width="0.8"/><path d="M14.5 0.5 L14.5 5.5" stroke="#1a1ab0" stroke-width="1.2"/></svg><svg style="left:213px;top:50px" width="17" height="16" viewBox="0 0 17 16"><rect x="0.5" y="0.5" width="13" height="13" fill="#fff" stroke="#444"/><rect x="2" y="2" width="10" height="10" fill="#111"/><path d="M3 4 L6 4 M8 4 L11 4 M3 7 L5 7 M3 10 L5 10" stroke="#ddd" stroke-width="1.2"/><circle cx="12" cy="11" r="3.3" fill="#f0e000" stroke="#a09000" stroke-width="0.8" stroke-dasharray="1.4 1"/></svg><svg style="left:9px;top:730px" width="36" height="36" viewBox="0 0 36 36"><defs><linearGradient id="orb" x1="0" y1="0" x2="0" y2="1"><stop offset="0" stop-color="#b4c8d8"/><stop offset=".42" stop-color="#5a88b0"/><stop offset=".5" stop-color="#0e4a84"/><stop offset=".8" stop-color="#1a78b8"/><stop offset="1" stop-color="#30c8f0"/></linearGradient><radialGradient id="orbglow" cx=".5" cy=".95" r=".45"><stop offset="0" stop-color="#40e8ff" stop-opacity=".9"/><stop offset="1" stop-color="#40e8ff" stop-opacity="0"/></radialGradient></defs><circle cx="18" cy="18" r="17.3" fill="url(#orb)" stroke="#d8e4ee" stroke-width="1" stroke-opacity=".8"/><circle cx="18" cy="18" r="16.2" fill="none" stroke="#0c3260" stroke-width="0.9"/><circle cx="18" cy="18" r="16" fill="url(#orbglow)"/><path d="M9.5 9 Q13 6.5 19 8.5 L17.5 16.5 Q12 14.5 8 16.5 Z" fill="#f4622a"/><path d="M20 9 Q25 11 30.5 8.5 L29 18 Q24 20.5 18.5 18 Z" fill="#8cc84a"/><path d="M7.5 18 Q12 16 17 18 L15.5 26 Q11 24 6 26.5 Z" fill="#34a8f0"/><path d="M18 19 Q23 21.5 28.5 19 L27 28 Q22 30 16.5 27.5 Z" fill="#fcc830"/></svg><svg style="left:73px;top:731px" width="32" height="31" viewBox="0 0 32 31"><defs><radialGradient id="ie" cx=".45" cy=".4" r=".6"><stop offset="0" stop-color="#d8f6ff"/><stop offset=".55" stop-color="#62c8f2"/><stop offset="1" stop-color="#2a94d8"/></radialGradient></defs><path d="M25.5 16.5 A9 9 0 1 0 23.5 22.5" stroke="#1a6eb4" stroke-width="7" fill="none"/><path d="M25.5 16.5 A9 9 0 1 0 23.5 22.5" stroke="url(#ie)" stroke-width="5" fill="none"/><rect x="8.5" y="15" width="18" height="3.6" fill="#62c8f2" stroke="#1a6eb4" stroke-width="0.9"/><path d="M2.5 29 Q-1 25 9 13.5 Q21 1 29 2 Q32.5 4 27 10.5" stroke="#c88a00" stroke-width="3.2" fill="none"/><path d="M2.5 29 Q-1 25 9 13.5 Q21 1 29 2 Q32.5 4 27 10.5" stroke="#ffd040" stroke-width="1.8" fill="none"/></svg><svg style="left:135px;top:734px" width="32" height="31" viewBox="0 0 32 31"><defs><linearGradient id="fb" x1="0" y1="0" x2="0.4" y2="1"><stop offset="0" stop-color="#fcf2cc"/><stop offset="1" stop-color="#f0d27e"/></linearGradient><linearGradient id="st" x1="0" y1="0" x2="0" y2="1"><stop offset="0" stop-color="#e0f6ff"/><stop offset=".5" stop-color="#8cd4f2"/><stop offset="1" stop-color="#4aa8dc"/></linearGradient></defs><path d="M1.5 6 L1.5 2 Q1.5 0.5 3 0.5 L14 0.5 Q15.5 0.5 15.5 2 L15.5 6 Z" fill="#f4dc98" stroke="#c8a858" stroke-width="0.9"/><rect x="3" y="1.5" width="3.5" height="2.5" fill="#18c018"/><rect x="6.5" y="1.5" width="5" height="2.5" fill="#fff"/><path d="M10.5 8 L10.5 4 Q10.5 2.8 12 2.8 L28 2.8 Q29.5 2.8 29.5 4 L29.5 8 Z" fill="#f4dc98" stroke="#c8a858" stroke-width="0.9"/><rect x="12" y="3.8" width="3" height="2.5" fill="#e03020"/><rect x="15" y="3.8" width="6" height="2.5" fill="#fff"/><path d="M17.5 10 L17.5 6.5 Q17.5 5.3 19 5.3 L29 5.3 Q30.5 5.3 30.5 6.5 L30.5 10 Z" fill="#f4dc98" stroke="#c8a858" stroke-width="0.9"/><rect x="19.5" y="6.3" width="3" height="2.5" fill="#2090f0"/><rect x="22.5" y="6.3" width="5" height="2.5" fill="#fff"/><path d="M0.5 8 L17 8 L18 10 L31 10 L31 29.5 L0.5 29.5 Z" fill="url(#fb)" stroke="#c8a858" stroke-width="0.9"/><rect x="1.8" y="11" width="28" height="17.5" fill="none" stroke="#fff8e0" stroke-width="0.8"/><path d="M4 30.5 L4 20 Q4 17 7 17 L24.5 17 Q27.5 17 27.5 20 L27.5 30.5 L21.5 30.5 L21.5 23 L10 23 L10 30.5 Z" fill="url(#st)" stroke="#3a90c8" stroke-width="0.9"/></svg><svg style="left:199px;top:736px" width="30" height="27" viewBox="0 0 30 27"><rect x="5.5" y="1.5" width="22" height="24" fill="#bce0f4" stroke="#6ab0d8"/><rect x="1.5" y="0.5" width="22" height="24" fill="#9fd4f0" stroke="#5aa8d8"/><circle cx="12.5" cy="12.5" r="9" fill="#f07820" stroke="#d05a10"/><circle cx="12.5" cy="12.5" r="7" fill="#ff9a40"/><path d="M9.5 7 L17.5 12.5 L9.5 18 Z" fill="#fff"/></svg><div class="a" style="left:245px;top:728px;width:55px;height:40px;border:1px solid #2c3a4c;border-radius:3px;background:linear-gradient(#eef2f8,#d8e2ee 50%,#cfdbe8);box-shadow:inset 0 0 0 1px rgba(255,255,255,.7)"></div><div class="a" style="left:299px;top:729px;width:6px;height:39px;border:1px solid #46566a;border-left:none;border-radius:0 3px 3px 0;background:linear-gradient(#d8e2ee,#c4d2e2)"></div><svg style="left:256px;top:731px" width="32" height="32" viewBox="0 0 32 32"><defs><linearGradient id="tb" x1="0" y1="0" x2="0" y2="1"><stop offset="0" stop-color="#c4ccd2"/><stop offset=".4" stop-color="#98a4ac"/><stop offset="1" stop-color="#5c6a72"/></linearGradient><linearGradient id="ts" x1="0" y1="0" x2="1" y2="0"><stop offset="0" stop-color="#0818b8"/><stop offset=".5" stop-color="#2a48e0"/><stop offset=".6" stop-color="#9ab0f4"/><stop offset="1" stop-color="#5070e8"/></linearGradient></defs><rect x="10.5" y="1" width="20" height="18" fill="#e4e8ea" stroke="#8a9096"/><rect x="12" y="3" width="17" height="14" fill="url(#ts)"/><rect x="3.5" y="9" width="7" height="12" fill="#dcdcd0" stroke="#9a9a90" stroke-width="0.8"/><rect x="4.5" y="11" width="2" height="2.5" fill="#607060"/><path d="M9 17.5 Q12.5 13 17 17.5" stroke="#1a1a1a" stroke-width="1.4" fill="none"/><path d="M1.5 18.5 L23.5 18.5 L25.5 21 L25.5 31.5 L0.5 31.5 L0.5 21 Z" fill="url(#tb)" stroke="#4c5860" stroke-width="0.9"/><path d="M1 22 L25 22" stroke="#d8e0e4" stroke-width="0.8"/><rect x="5" y="21" width="2.2" height="4" rx="1" fill="#e8eef0" stroke="#3a444a" stroke-width="0.6"/><rect x="14" y="21" width="2.2" height="4" rx="1" fill="#e8eef0" stroke="#3a444a" stroke-width="0.6"/></svg><svg style="left:846px;top:746px" width="10" height="6" viewBox="0 0 10 6"><path d="M0.5 5.5 L5 0.5 L9.5 5.5 Z" fill="#f4f6fa" stroke="#5a6a80" stroke-width="0.8"/></svg><svg style="left:867px;top:741px" width="17" height="16" viewBox="0 0 17 16"><path d="M1.5 1 L1.5 15.5" stroke="#fff" stroke-width="1.6"/><path d="M1.5 15.5" stroke="#223"/><path d="M2.5 1.5 Q6 0 9 2 Q12 4 16 2.5 L15 8 Q12 10 9 8 Q6 6 2.5 7.5 Z" fill="#f8f8f8" stroke="#3a4250" stroke-width="0.9"/></svg><svg style="left:891px;top:742px" width="17" height="16" viewBox="0 0 17 16"><rect x="4.5" y="3.5" width="12" height="11" fill="#8a9098" stroke="#e8e8e8"/><rect x="6" y="5" width="9" height="8" fill="#4a5460"/><path d="M1 0 L1 4 L5 4 L5 0 M3 4 L3 12 L8 12" stroke="#fff" stroke-width="1.2" fill="none"/><path d="M7.5 8.5 L14.5 15 M14.5 8.5 L7.5 15" stroke="#e01010" stroke-width="2"/></svg><svg style="left:915px;top:742px" width="16" height="14" viewBox="0 0 16 14"><path d="M0.5 4.5 L3.5 4.5 L7.5 0.5 L7.5 13.5 L3.5 9.5 L0.5 9.5 Z" fill="#f2f2f4" stroke="#3a4250" stroke-width="0.9"/><path d="M9.5 4 Q11 7 9.5 10 M11.5 2.5 Q14 7 11.5 11.5 M13.5 1 Q16.5 7 13.5 13" stroke="#f2f2f4" stroke-width="1.1" fill="none"/></svg><div class="t" style="left:953px;top:734px;letter-spacing:-0.07px;color:#eef2f8">6:50 PM</div><div class="t" style="left:948px;top:751px;letter-spacing:-0.1px;color:#eef2f8">6/10/2021</div><div class="a" style="left:1009px;top:728px;width:1px;height:40px;background:#3e4c5e"></div><div class="a" style="left:1010px;top:729px;width:13px;height:39px;border:1px solid #c4ced8;background:linear-gradient(#909aa6,#5e6c7e 35%,#5a687a 70%,#6c7c92)"></div><div class="a" style="left:1023px;top:728px;width:1px;height:40px;background:#4a586a"></div><div class="a" style="left:608px;top:267px;width:414px;height:461px;background:#000;border-radius:6px 6px 0 0"></div><div class="a" style="left:609px;top:268px;width:412px;height:459px;background:linear-gradient(#92b1d2,#a9c5e2 12px,#b9d1ea 28px,#b7cfe8 60%,#bcd4ec);border-radius:5px 5px 0 0;border-top:1px solid #fff;border-left:1px solid #fff;border-right:1px solid #3cd4f4;border-bottom:1px solid #3cd4f4"></div><div class="a" style="left:616px;top:297px;width:398px;height:423px;background:#f0f0f0"></div><div class="t" style="left:620px;top:279px;color:#000;letter-spacing:-0.31px">VMware, VMware Virtual S SCSI Disk Device Properties</div><div class="a" style="left:981px;top:277px;width:32px;height:17px;border:1px solid #4a1820;border-radius:3px;background:linear-gradient(#eab1a2,#dd8f7b 45%,#c4452a 50%,#c85a3e 75%,#dc8a72);box-shadow:inset 0 0 0 1px rgba(255,220,210,.5)"></div><svg style="left:990px;top:280px" width="14" height="11" viewBox="0 0 14 11"><path d="M3.5 3.2 L10.5 7.8 M10.5 3.2 L3.5 7.8" stroke="#3d3540" stroke-width="4.2" stroke-linecap="round"/><path d="M3.5 3.2 L10.5 7.8 M10.5 3.2 L3.5 7.8" stroke="#f6f6f6" stroke-width="2.3" stroke-linecap="round"/></svg><div class="a" style="left:622px;top:324px;width:384px;height:359px;background:#fff;border:1px solid #898c95"></div><div class="a" style="left:624px;top:306px;width:49px;height:19px;background:linear-gradient(#f3f3f3,#ebebeb 50%,#dbdbdb 55%,#d0d0d0);border:1px solid #898c95;border-bottom:none;box-shadow:inset 1px 1px 0 #fff"></div><div class="dt" style="left:630px;top:309px;">General</div><div class="a" style="left:673px;top:306px;width:47px;height:19px;background:linear-gradient(#f3f3f3,#ebebeb 50%,#dbdbdb 55%,#d0d0d0);border:1px solid #898c95;border-bottom:none;box-shadow:inset 1px 1px 0 #fff"></div><div class="dt" style="left:678px;top:309px;">Policies</div><div class="a" style="left:775px;top:306px;width:40px;height:19px;background:linear-gradient(#f3f3f3,#ebebeb 50%,#dbdbdb 55%,#d0d0d0);border:1px solid #898c95;border-bottom:none;box-shadow:inset 1px 1px 0 #fff"></div><div class="dt" style="left:779px;top:309px;">Driver</div><div class="a" style="left:815px;top:306px;width:42px;height:19px;background:linear-gradient(#f3f3f3,#ebebeb 50%,#dbdbdb 55%,#d0d0d0);border:1px solid #898c95;border-bottom:none;box-shadow:inset 1px 1px 0 #fff"></div><div class="dt" style="left:821px;top:309px;">Details</div><div class="a" style="left:719px;top:304px;width:56px;height:21px;background:#fff;border:1px solid #898c95;border-bottom:none"></div><div class="dt" style="left:727px;top:307px;">Volumes</div><div class="dt" style="left:637px;top:337px;">The volumes contained on this disk are listed below.</div><div class="a" style="left:637px;top:359px;width:362px;height:1px;background:#a0a0a0"></div><div class="dt" style="left:637px;top:368px;">Disk:</div><div class="dt" style="left:751px;top:368px;">Disk 0</div><div class="dt" style="left:637px;top:389px;">Type:</div><div class="dt" style="left:751px;top:389px;">Basic</div><div class="dt" style="left:637px;top:410px;">Status:</div><div class="dt" style="left:751px;top:410px;">Online</div><div class="dt" style="left:637px;top:431px;">Partition style:</div><div class="dt" style="left:751px;top:431px;">GUID Partition Table (GPT)</div><div class="dt" style="left:637px;top:452px;">Capacity:</div><div class="dt" style="left:751px;top:452px;">61312 MB</div><div class="dt" style="left:637px;top:473px;">Unallocated space:</div><div class="dt" style="left:751px;top:473px;">2 MB</div><div class="dt" style="left:637px;top:494px;">Reserved space:</div><div class="dt" style="left:751px;top:494px;">100 MB</div><div class="dt" style="left:637px;top:523px;">Volumes:</div><div class="a" style="left:637px;top:541px;width:365px;height:85px;background:#fff;border:1px solid #828790"></div><div class="a" style="left:638px;top:542px;width:363px;height:23px;background:linear-gradient(#fff,#fff 40%,#f4f5f7 45%,#f1f2f4)"></div><div class="a" style="left:638px;top:565px;width:363px;height:1px;background:#d8dadd"></div><div class="a" style="left:878px;top:543px;width:1px;height:22px;background:#e2e3e5"></div><div class="a" style="left:998px;top:543px;width:1px;height:22px;background:#e2e3e5"></div><div class="dt" style="left:645px;top:548px;">Volume</div><div class="dt" style="left:884px;top:548px;">Capacity</div><svg style="left:643px;top:571px" width="16" height="10" viewBox="0 0 16 10"><defs><linearGradient id="dg2" x1="0" y1="0" x2="0" y2="1"><stop offset="0" stop-color="#d4d4d4"/><stop offset="1" stop-color="#9c9c9c"/></linearGradient></defs><path d="M2.5 3.5 Q3 0.6 5.5 0.6 L10.5 0.6 Q13 0.6 13.5 3.5" fill="#f0f0f0" stroke="#8c8c8c" stroke-width="0.9"/><rect x="0.6" y="3.2" width="14.8" height="5.6" rx="2" fill="url(#dg2)" stroke="#6a6a6a" stroke-width="0.9"/><rect x="11.5" y="5.3" width="1.6" height="1.6" fill="#30d030"/></svg><div class="dt" style="left:884px;top:569px;">300 MB</div><svg style="left:643px;top:588px" width="16" height="10" viewBox="0 0 16 10"><defs><linearGradient id="dg2" x1="0" y1="0" x2="0" y2="1"><stop offset="0" stop-color="#d4d4d4"/><stop offset="1" stop-color="#9c9c9c"/></linearGradient></defs><path d="M2.5 3.5 Q3 0.6 5.5 0.6 L10.5 0.6 Q13 0.6 13.5 3.5" fill="#f0f0f0" stroke="#8c8c8c" stroke-width="0.9"/><rect x="0.6" y="3.2" width="14.8" height="5.6" rx="2" fill="url(#dg2)" stroke="#6a6a6a" stroke-width="0.9"/><rect x="11.5" y="5.3" width="1.6" height="1.6" fill="#30d030"/></svg><div class="dt" style="left:663px;top:586px;">(C:)</div><div class="dt" style="left:884px;top:586px;">60910 MB</div><div class="a" style="left:914px;top:633px;width:72px;height:21px;border:1px solid #adb2b5;border-radius:3px;background:#f4f4f4"></div><div class="dt" style="left:926px;top:637px;color:#838383">Properties</div><div class="a" style="left:853px;top:691px;width:73px;height:21px;border:1px solid #3c7fb1;border-radius:3px;background:linear-gradient(#f2f4f7,#e6ebf0 45%,#d6dee6 50%,#cdd7e0);box-shadow:inset 0 0 0 1px #48d8fb"></div><div class="dt" style="left:881px;top:695px;">OK</div><div class="a" style="left:934px;top:691px;width:73px;height:21px;border:1px solid #707070;border-radius:3px;background:linear-gradient(#f2f2f2,#ebebeb 45%,#dddddd 50%,#cfcfcf);box-shadow:inset 0 0 0 1px #fcfcfc"></div><div class="dt" style="left:954px;top:695px;">Cancel</div>
</body></html>
